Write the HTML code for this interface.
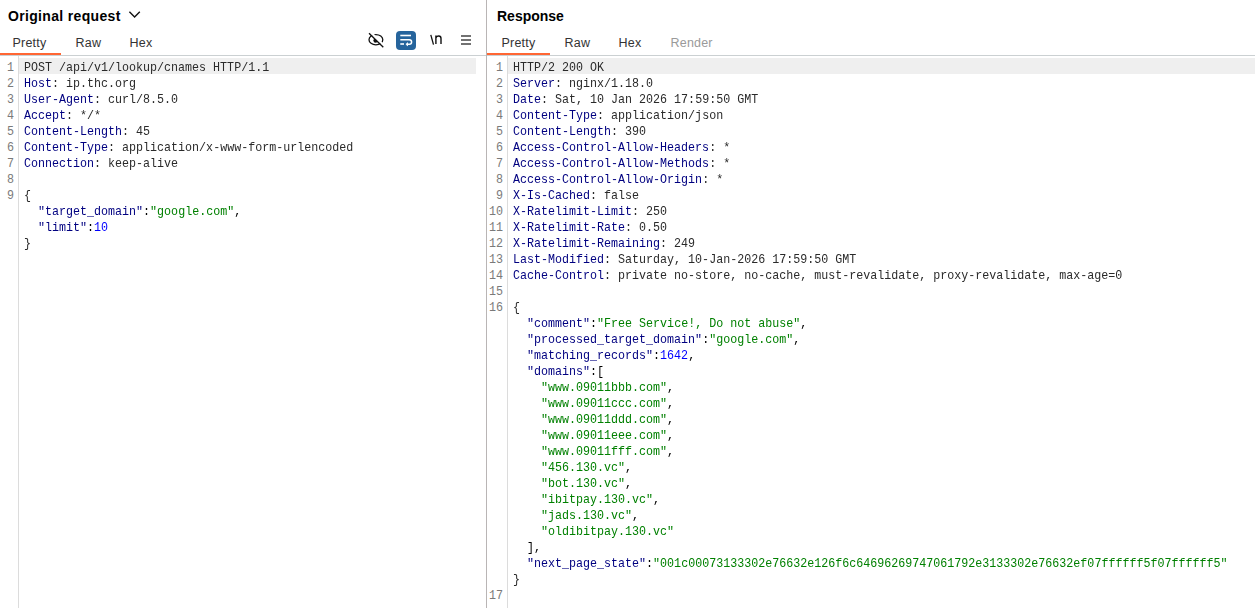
<!DOCTYPE html>
<html><head><meta charset="utf-8">
<style>
*{margin:0;padding:0;box-sizing:border-box}
html,body{width:1255px;height:608px;overflow:hidden;background:#fff}
body{position:relative;font-family:"Liberation Sans",sans-serif;color:#000}
.abs{position:absolute}
.title{position:absolute;top:6px;font-weight:bold;font-size:14px;letter-spacing:0.33px;line-height:20px;transform:scaleY(1.1);transform-origin:0 15px;color:#000;white-space:nowrap}
.tab{position:absolute;top:35px;font-size:12.5px;letter-spacing:0.2px;line-height:16px;color:#333;white-space:nowrap}
.tab.dis{color:#9a9a9a}
.uline{position:absolute;top:53px;height:2px;background:#ff6633}
.hline{position:absolute;top:55px;height:1px;background:#cbd0d2}
.vline{position:absolute;background:#b9b5b5;width:1px}
.gut{position:absolute;top:56px;width:1px;bottom:0;background:#dcdcdc}
.hl{position:absolute;top:58px;height:16px;background:#efefef}
.ln{position:absolute;height:16px;font-family:"Liberation Mono",monospace;font-size:11.68px;line-height:16px;color:#2a2a2a;white-space:pre;transform:scaleY(1.13);transform-origin:0 8px;will-change:transform}
.num{position:absolute;width:40px;height:16px;font-family:"Liberation Mono",monospace;font-size:11.68px;line-height:16px;color:#7a7a7a;white-space:pre;text-align:right;transform:scaleY(1.13);transform-origin:0 8px}
.k{color:#000080}
.s{color:#008000}
.n{color:#0000ff}
.p{color:#000}
</style></head><body>

<!-- LEFT PANEL -->
<div class="title" style="left:8px">Original request</div>
<svg class="abs" style="left:128px;top:10px" width="14" height="9" viewBox="0 0 14 9"><path d="M1.4 1.7 L6.6 6.9 L11.8 1.7" fill="none" stroke="#111" stroke-width="1.4"/></svg>
<div class="tab" style="left:12.5px">Pretty</div>
<div class="tab" style="left:75.5px">Raw</div>
<div class="tab" style="left:129.5px">Hex</div>
<div class="hline" style="left:0;width:486px"></div>
<div class="uline" style="left:0;width:61px"></div>

<!-- icons -->
<svg class="abs" style="left:360px;top:28px" width="120" height="24" viewBox="360 28 120 24">
  <ellipse cx="375.9" cy="39.7" rx="6.9" ry="5.15" fill="none" stroke="#111" stroke-width="1.3"/>
  <clipPath id="pc"><path d="M360 28 L369 33.2 L383.3 47.3 L360 52 Z"/></clipPath>
  <circle cx="375.6" cy="40.6" r="2.2" fill="#111" clip-path="url(#pc)"/>
  <path d="M370.1 31.9 L384.6 46.2" stroke="#fff" stroke-width="2.3"/>
  <path d="M369 33.2 L383.3 47.3" stroke="#111" stroke-width="1.3"/>
  <rect x="396" y="31" width="20" height="19" rx="4" fill="#26649c"/>
  <path d="M400.3 35.5 H411" stroke="#fff" stroke-width="1.6"/>
  <path d="M400.3 39.7 H409.3 A2.3 2.3 0 0 1 409.3 44.3 H407.5" fill="none" stroke="#fff" stroke-width="1.5"/>
  <path d="M408 42.6 L405.9 44.3 L408 46" fill="#fff" stroke="#fff" stroke-width="0.8"/>
  <path d="M400.3 44 H404" stroke="#fff" stroke-width="1.6"/>
  <path d="M430.8 34.8 L433.5 44.7" stroke="#111" stroke-width="1.3"/>
  <path d="M435.9 35.4 V44 M435.9 38 C436.6 35.6 441 35 441 38.6 V44" fill="none" stroke="#111" stroke-width="1.4"/>
  <path d="M461 36 H471 M461 40 H471 M461 44 H471" stroke="#444" stroke-width="1.7"/>
</svg>

<div class="gut" style="left:18px"></div>
<div class="hl" style="left:19px;width:457px"></div>
<div class="num" style="left:-26px;top:60px">1</div>
<div class="num" style="left:-26px;top:76px">2</div>
<div class="num" style="left:-26px;top:92px">3</div>
<div class="num" style="left:-26px;top:108px">4</div>
<div class="num" style="left:-26px;top:124px">5</div>
<div class="num" style="left:-26px;top:140px">6</div>
<div class="num" style="left:-26px;top:156px">7</div>
<div class="num" style="left:-26px;top:172px">8</div>
<div class="num" style="left:-26px;top:188px">9</div>
<div class="ln" style="left:24px;top:60px">POST /api/v1/lookup/cnames HTTP/1.1</div>
<div class="ln" style="left:24px;top:76px"><span class="k">Host</span>: ip.thc.org</div>
<div class="ln" style="left:24px;top:92px"><span class="k">User-Agent</span>: curl/8.5.0</div>
<div class="ln" style="left:24px;top:108px"><span class="k">Accept</span>: */*</div>
<div class="ln" style="left:24px;top:124px"><span class="k">Content-Length</span>: 45</div>
<div class="ln" style="left:24px;top:140px"><span class="k">Content-Type</span>: application/x-www-form-urlencoded</div>
<div class="ln" style="left:24px;top:156px"><span class="k">Connection</span>: keep-alive</div>
<div class="ln" style="left:24px;top:188px">{</div>
<div class="ln" style="left:24px;top:204px">  <span class="k">"target_domain"</span><span class="p">:</span><span class="s">"google.com"</span><span class="p">,</span></div>
<div class="ln" style="left:24px;top:220px">  <span class="k">"limit"</span><span class="p">:</span><span class="n">10</span></div>
<div class="ln" style="left:24px;top:236px">}</div>

<div class="vline" style="left:486px;top:0;height:608px"></div>

<!-- RIGHT PANEL -->
<div class="title" style="left:497px;letter-spacing:0">Response</div>
<div class="tab" style="left:501.5px">Pretty</div>
<div class="tab" style="left:564.5px">Raw</div>
<div class="tab" style="left:618.5px">Hex</div>
<div class="tab dis" style="left:670.5px">Render</div>
<div class="hline" style="left:487px;width:768px"></div>
<div class="uline" style="left:487px;width:63px"></div>

<div class="gut" style="left:507px"></div>
<div class="hl" style="left:508px;width:747px"></div>
<div class="num" style="left:463px;top:60px">1</div>
<div class="num" style="left:463px;top:76px">2</div>
<div class="num" style="left:463px;top:92px">3</div>
<div class="num" style="left:463px;top:108px">4</div>
<div class="num" style="left:463px;top:124px">5</div>
<div class="num" style="left:463px;top:140px">6</div>
<div class="num" style="left:463px;top:156px">7</div>
<div class="num" style="left:463px;top:172px">8</div>
<div class="num" style="left:463px;top:188px">9</div>
<div class="num" style="left:463px;top:204px">10</div>
<div class="num" style="left:463px;top:220px">11</div>
<div class="num" style="left:463px;top:236px">12</div>
<div class="num" style="left:463px;top:252px">13</div>
<div class="num" style="left:463px;top:268px">14</div>
<div class="num" style="left:463px;top:284px">15</div>
<div class="num" style="left:463px;top:300px">16</div>
<div class="num" style="left:463px;top:588px">17</div>
<div class="ln" style="left:513px;top:60px">HTTP/2 200 OK</div>
<div class="ln" style="left:513px;top:76px"><span class="k">Server</span>: nginx/1.18.0</div>
<div class="ln" style="left:513px;top:92px"><span class="k">Date</span>: Sat, 10 Jan 2026 17:59:50 GMT</div>
<div class="ln" style="left:513px;top:108px"><span class="k">Content-Type</span>: application/json</div>
<div class="ln" style="left:513px;top:124px"><span class="k">Content-Length</span>: 390</div>
<div class="ln" style="left:513px;top:140px"><span class="k">Access-Control-Allow-Headers</span>: *</div>
<div class="ln" style="left:513px;top:156px"><span class="k">Access-Control-Allow-Methods</span>: *</div>
<div class="ln" style="left:513px;top:172px"><span class="k">Access-Control-Allow-Origin</span>: *</div>
<div class="ln" style="left:513px;top:188px"><span class="k">X-Is-Cached</span>: false</div>
<div class="ln" style="left:513px;top:204px"><span class="k">X-Ratelimit-Limit</span>: 250</div>
<div class="ln" style="left:513px;top:220px"><span class="k">X-Ratelimit-Rate</span>: 0.50</div>
<div class="ln" style="left:513px;top:236px"><span class="k">X-Ratelimit-Remaining</span>: 249</div>
<div class="ln" style="left:513px;top:252px"><span class="k">Last-Modified</span>: Saturday, 10-Jan-2026 17:59:50 GMT</div>
<div class="ln" style="left:513px;top:268px"><span class="k">Cache-Control</span>: private no-store, no-cache, must-revalidate, proxy-revalidate, max-age=0</div>
<div class="ln" style="left:513px;top:300px">{</div>
<div class="ln" style="left:513px;top:316px">  <span class="k">"comment"</span><span class="p">:</span><span class="s">"Free Service!, Do not abuse"</span><span class="p">,</span></div>
<div class="ln" style="left:513px;top:332px">  <span class="k">"processed_target_domain"</span><span class="p">:</span><span class="s">"google.com"</span><span class="p">,</span></div>
<div class="ln" style="left:513px;top:348px">  <span class="k">"matching_records"</span><span class="p">:</span><span class="n">1642</span><span class="p">,</span></div>
<div class="ln" style="left:513px;top:364px">  <span class="k">"domains"</span><span class="p">:[</span></div>
<div class="ln" style="left:513px;top:380px">    <span class="s">"www.09011bbb.com"</span><span class="p">,</span></div>
<div class="ln" style="left:513px;top:396px">    <span class="s">"www.09011ccc.com"</span><span class="p">,</span></div>
<div class="ln" style="left:513px;top:412px">    <span class="s">"www.09011ddd.com"</span><span class="p">,</span></div>
<div class="ln" style="left:513px;top:428px">    <span class="s">"www.09011eee.com"</span><span class="p">,</span></div>
<div class="ln" style="left:513px;top:444px">    <span class="s">"www.09011fff.com"</span><span class="p">,</span></div>
<div class="ln" style="left:513px;top:460px">    <span class="s">"456.130.vc"</span><span class="p">,</span></div>
<div class="ln" style="left:513px;top:476px">    <span class="s">"bot.130.vc"</span><span class="p">,</span></div>
<div class="ln" style="left:513px;top:492px">    <span class="s">"ibitpay.130.vc"</span><span class="p">,</span></div>
<div class="ln" style="left:513px;top:508px">    <span class="s">"jads.130.vc"</span><span class="p">,</span></div>
<div class="ln" style="left:513px;top:524px">    <span class="s">"oldibitpay.130.vc"</span></div>
<div class="ln" style="left:513px;top:540px">  <span class="p">],</span></div>
<div class="ln" style="left:513px;top:556px">  <span class="k">"next_page_state"</span><span class="p">:</span><span class="s">"001c00073133302e76632e126f6c64696269747061792e3133302e76632ef07ffffff5f07ffffff5"</span></div>
<div class="ln" style="left:513px;top:572px">}</div>

</body></html>
